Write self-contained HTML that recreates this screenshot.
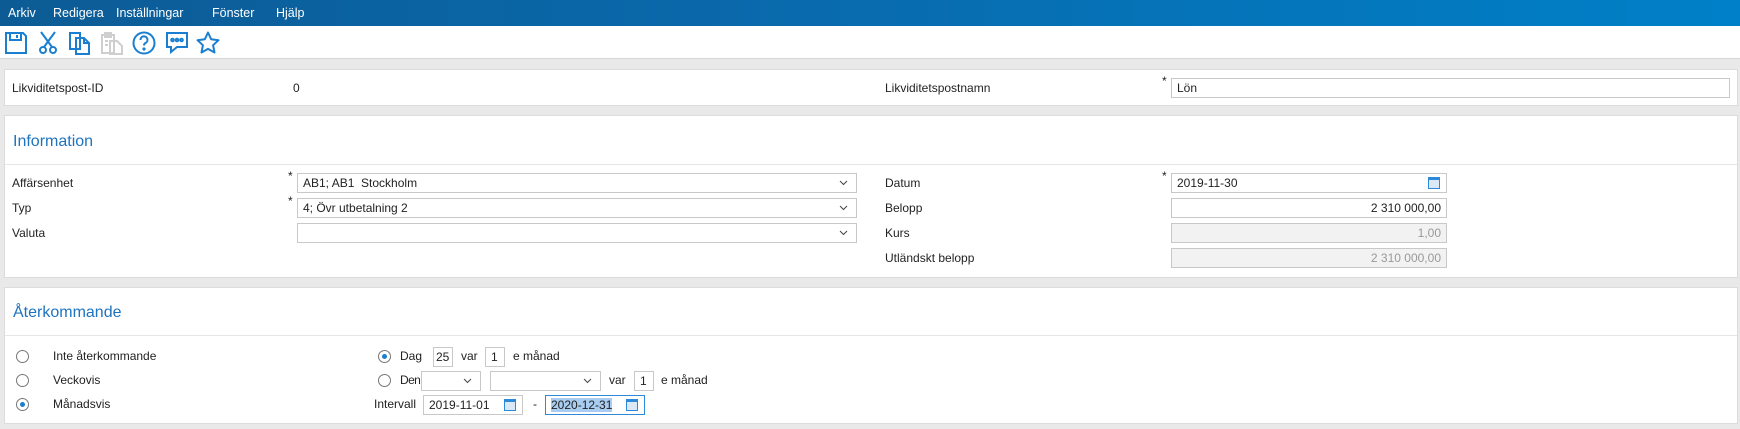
<!DOCTYPE html>
<html><head><meta charset="utf-8"><style>
*{box-sizing:border-box;margin:0;padding:0}
body{width:1740px;height:429px;background:#e9e9e9;font-family:"Liberation Sans",sans-serif;font-size:12px;line-height:14px;color:#222;position:relative;overflow:hidden}
.a{position:absolute}
.menu{left:0;top:0;width:1740px;height:26px;background:linear-gradient(90deg,#0c5b95,#0a68aa 40%,#0080c8)}
.menu span{position:absolute;top:6px;color:#fff;font-size:12.5px}
.tb{left:0;top:26px;width:1740px;height:33px;background:#fff;border-bottom:1px solid #d6d6d6}
.p{background:#fff;border:1px solid #dcdcdc;left:4px;width:1734px}
.h{color:#1e73be;font-size:16px;line-height:18px;left:13px}
.dv{left:5px;width:1732px;height:1px;background:#e6e6e6}
.in{border:1px solid #c8c8c8;background:#fff;height:20px;line-height:18px;padding:0 5px;font-size:12px}
.dis{background:#f2f2f2;color:#999;text-align:right}
.r{text-align:right}
.chev{position:absolute;right:8px;top:6px}
.rad{width:13px;height:13px;border:1px solid #777;border-radius:50%;background:#fff}
.rad.on::after{content:"";position:absolute;left:3px;top:3px;width:5px;height:5px;border-radius:50%;background:#1a7fd0}
.cal{position:absolute;right:6px;top:3px;width:12px;height:12px;border:1.5px solid #2e8ad8;border-top-width:3px;background:#dbe9f7}
</style></head><body>
<div class="a menu"><span style="left:8px">Arkiv</span><span style="left:53px">Redigera</span><span style="left:116px">Inställningar</span><span style="left:212px">Fönster</span><span style="left:276px">Hjälp</span></div>
<div class="a tb">
<svg class="a" style="left:4px;top:5px" width="24" height="24" viewBox="0 0 24 24" fill="none" stroke="#1a7fd0" stroke-width="2"><path d="M2 2h17l3 3v17H2z"/><path d="M6 2v7h11V2"/><path d="M13 4v3"/></svg>
<svg class="a" style="left:38px;top:5px" width="20" height="24" viewBox="0 0 20 24" fill="none" stroke="#1a7fd0" stroke-width="2"><path d="M3 1l11 15M17 1L6 16"/><circle cx="5" cy="19" r="3"/><circle cx="15" cy="19" r="3"/></svg>
<svg class="a" style="left:68px;top:5px" width="24" height="24" viewBox="0 0 24 24" fill="none" stroke="#1a7fd0" stroke-width="2"><path d="M2 2h10v16H2z"/><path d="M8 7h8l5 5v11H8z"/><path d="M16 7v5h5"/></svg>
<svg class="a" style="left:100px;top:5px" width="24" height="24" viewBox="0 0 24 24" fill="none" stroke="#cfcfcf" stroke-width="2"><path d="M2 4h12v18H2z"/><path d="M5 2h6v4H5z"/><path d="M10 10h7l5 5v8H10z"/><path d="M5 10h3M5 14h3"/></svg>
<svg class="a" style="left:132px;top:5px" width="24" height="24" viewBox="0 0 24 24" fill="none" stroke="#1a7fd0" stroke-width="2"><circle cx="12" cy="12" r="10.5"/><path d="M8.5 9a3.5 3.5 0 1 1 5 3c-1.2.7-1.5 1.3-1.5 2.5"/><circle cx="12" cy="18" r=".6" fill="#1a7fd0"/></svg>
<svg class="a" style="left:164px;top:5px" width="26" height="24" viewBox="0 0 26 24" fill="none" stroke="#1a7fd0" stroke-width="2"><path d="M3 2h20v14H13l-6 5v-5H3z"/><circle cx="8.5" cy="9" r="1.3"/><circle cx="13" cy="9" r="1.3"/><circle cx="17.5" cy="9" r="1.3"/></svg>
<svg class="a" style="left:196px;top:5px" width="24" height="24" viewBox="0 0 24 24" fill="none" stroke="#1a7fd0" stroke-width="2" stroke-linejoin="round"><path d="M12 1.5l3.2 6.8 7.3.9-5.4 5 1.4 7.3L12 17.9l-6.5 3.6 1.4-7.3-5.4-5 7.3-.9z"/></svg>
</div>

<div class="a p" style="top:69px;height:37px"></div>
<div class="a" style="left:12px;top:81px">Likviditetspost-ID</div>
<div class="a" style="left:293px;top:81px">0</div>
<div class="a" style="left:885px;top:81px">Likviditetspostnamn</div>
<div class="a" style="left:1162px;top:74px">*</div>
<div class="a in" style="left:1171px;top:78px;width:559px;height:20px">Lön</div>

<div class="a p" style="top:115px;height:163px"></div>
<div class="a h" style="top:133px">Information</div>
<div class="a dv" style="top:164px"></div>
<div class="a" style="left:12px;top:176px">Affärsenhet</div>
<div class="a" style="left:12px;top:201px">Typ</div>
<div class="a" style="left:12px;top:226px">Valuta</div>
<div class="a" style="left:288px;top:169px">*</div>
<div class="a" style="left:288px;top:194px">*</div>
<div class="a in" style="left:297px;top:173px;width:560px">AB1; AB1&nbsp; Stockholm<svg class="chev" width="9" height="6" viewBox="0 0 9 6"><path d="M1 1l3.5 3.5L8 1" fill="none" stroke="#444"/></svg></div>
<div class="a in" style="left:297px;top:198px;width:560px">4; Övr utbetalning 2<svg class="chev" width="9" height="6" viewBox="0 0 9 6"><path d="M1 1l3.5 3.5L8 1" fill="none" stroke="#444"/></svg></div>
<div class="a in" style="left:297px;top:223px;width:560px"><svg class="chev" width="9" height="6" viewBox="0 0 9 6"><path d="M1 1l3.5 3.5L8 1" fill="none" stroke="#444"/></svg></div>
<div class="a" style="left:885px;top:176px">Datum</div>
<div class="a" style="left:885px;top:201px">Belopp</div>
<div class="a" style="left:885px;top:226px">Kurs</div>
<div class="a" style="left:885px;top:251px">Utländskt belopp</div>
<div class="a" style="left:1162px;top:169px">*</div>
<div class="a in" style="left:1171px;top:173px;width:276px">2019-11-30<span class="cal"></span></div>
<div class="a in r" style="left:1171px;top:198px;width:276px">2 310 000,00</div>
<div class="a in dis" style="left:1171px;top:223px;width:276px">1,00</div>
<div class="a in dis" style="left:1171px;top:248px;width:276px">2 310 000,00</div>

<div class="a p" style="top:287px;height:137px"></div>
<div class="a h" style="top:304px">Återkommande</div>
<div class="a dv" style="top:335px"></div>
<div class="a rad" style="left:16px;top:350px"></div><div class="a" style="left:53px;top:349px">Inte återkommande</div>
<div class="a rad" style="left:16px;top:374px"></div><div class="a" style="left:53px;top:373px">Veckovis</div>
<div class="a rad on" style="left:16px;top:398px"></div><div class="a" style="left:53px;top:397px">Månadsvis</div>

<div class="a rad on" style="left:378px;top:350px"></div><div class="a" style="left:400px;top:349px">Dag</div>
<div class="a in" style="left:433px;top:347px;width:20px;padding:0 2px">25</div>
<div class="a" style="left:461px;top:349px">var</div>
<div class="a in" style="left:485px;top:347px;width:20px">1</div>
<div class="a" style="left:513px;top:349px">e månad</div>

<div class="a rad" style="left:378px;top:374px"></div><div class="a" style="left:400px;top:373px;letter-spacing:-0.6px">Den</div>
<div class="a in" style="left:421px;top:371px;width:60px"><svg class="chev" width="9" height="6" viewBox="0 0 9 6"><path d="M1 1l3.5 3.5L8 1" fill="none" stroke="#444"/></svg></div>
<div class="a in" style="left:490px;top:371px;width:111px"><svg class="chev" width="9" height="6" viewBox="0 0 9 6"><path d="M1 1l3.5 3.5L8 1" fill="none" stroke="#444"/></svg></div>
<div class="a" style="left:609px;top:373px">var</div>
<div class="a in" style="left:634px;top:371px;width:20px">1</div>
<div class="a" style="left:661px;top:373px">e månad</div>

<div class="a" style="left:374px;top:397px">Intervall</div>
<div class="a in" style="left:423px;top:395px;width:100px">2019-11-01<span class="cal"></span></div>
<div class="a" style="left:533px;top:397px">-</div>
<div class="a in" style="left:545px;top:395px;width:100px;border-color:#2e8ad8"><span style="background:#a9cdf0">2020-12-31</span><span class="cal"></span></div>
</body></html>
